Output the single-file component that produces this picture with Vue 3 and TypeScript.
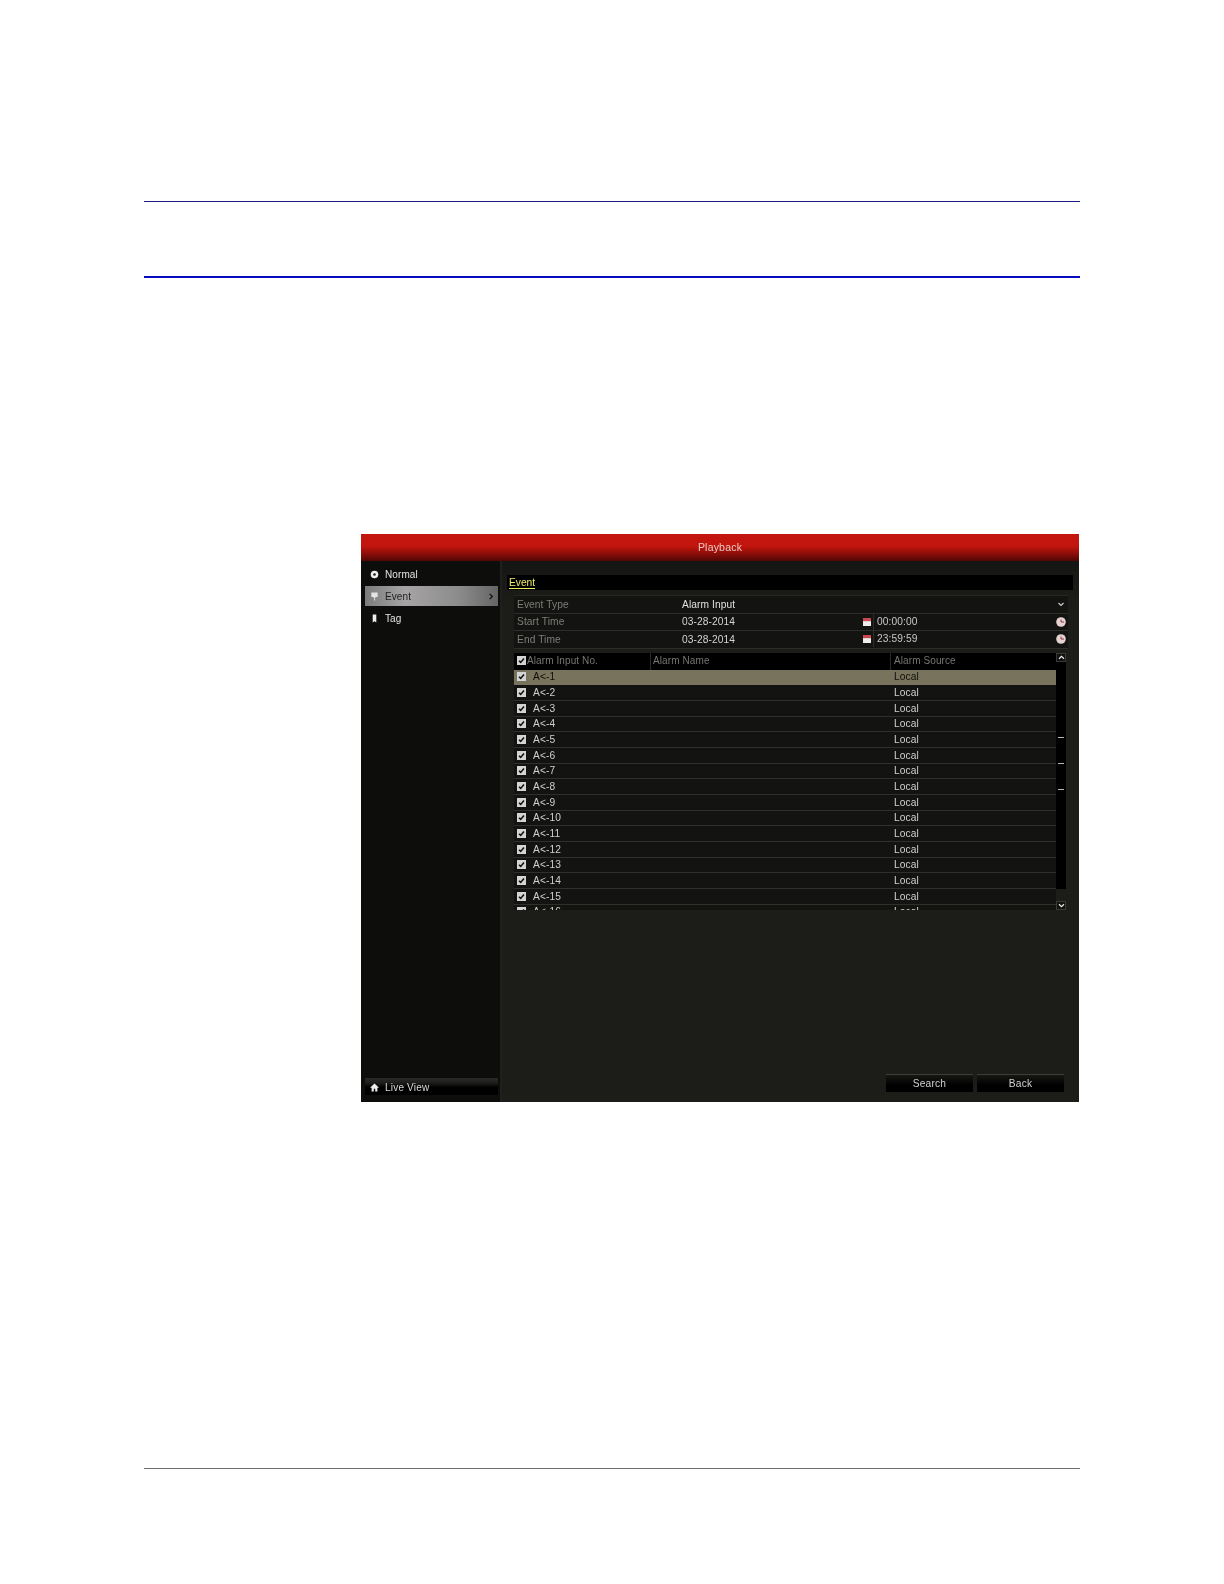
<script setup lang="ts">
const rows: number[] = Array.from({ length: 16 }, (_, i) => i + 1)
</script>

<template>
  <div class="page">
    <div class="rule-top"></div>
    <div class="rule-second"></div>
    <section class="screen">
      <header class="title">Playback</header>
      <div class="body">
        <aside class="side">
          <nav class="menu">
            <div class="item">
              <svg class="ico" viewBox="0 0 10 10"><circle cx="5" cy="5" r="4.200" fill="#eee" /><circle cx="5" cy="5" r="1.500" fill="#222" /></svg>
              <span>Normal</span>
            </div>
            <div class="item active">
              <svg class="ico" viewBox="0 0 10 10"><path d="M1.500 .5h7v5H6v1.500H4V5.500H1.500z" fill="#e4e4e4" /><rect x="4.300" y="7" width="1.400" height="2.500" fill="#cfcfcf" /></svg>
              <span>Event</span>
              <svg class="more" viewBox="0 0 6 8"><path d="M1.500 1l3 3-3 3" fill="none" stroke="#111" stroke-width="1.500" /></svg>
            </div>
            <div class="item">
              <svg class="ico" viewBox="0 0 10 10"><path d="M3 .5h4v9L5 8 3 9.500z" fill="#eee" /></svg>
              <span>Tag</span>
            </div>
          </nav>
          <div class="live">
            <svg class="ico" viewBox="0 0 10 10"><path d="M5 .5L0 5.200h1.800V9.500h2.400V6.500h1.600v3h2.400V5.200H10z" fill="#f0f0f0" /></svg>
            <span>Live View</span>
          </div>
        </aside>
        <main class="main">
          <div class="tabs"><span class="tab">Event</span></div>
          <div class="form">
            <div class="f-row">
              <span class="f-label">Event Type</span>
              <span class="f-value white">Alarm Input</span>
              <svg class="caret" viewBox="0 0 8 5"><path d="M1.500 1l2.500 2.500L6.500 1" fill="none" stroke="#ccc" stroke-width="1.200" /></svg>
            </div>
            <div class="f-row" v-for="r in [{ l: 'Start Time', t: '00:00:00' }, { l: 'End Time', t: '23:59:59' }]" :key="r.l">
              <span class="f-label">{{ r.l }}</span>
              <span class="f-value date">03-28-2014</span>
              <svg class="cal" viewBox="0 0 8 8"><rect width="8" height="8" fill="#eee" /><rect width="8" height="3.200" fill="#c9474e" /></svg>
              <span class="f-time">{{ r.t }}</span>
              <svg class="clock" viewBox="0 0 10 10"><circle cx="5" cy="5" r="4.800" fill="#e6d2d2" /><path d="M5 2.500V5H8" fill="none" stroke="#8d3a3a" stroke-width="1" /></svg>
            </div>
          </div>
          <div class="list">
            <div class="table">
              <div class="t-head">
                <div class="h1"><span class="check head-check"><svg viewBox="0 0 8 8"><path d="M1.800 4.200l1.500 1.500 2.900-3.400" fill="none" stroke="#111" stroke-width="1.400" /></svg></span>Alarm Input No.</div>
                <div class="h2">Alarm Name</div>
                <div class="h3">Alarm Source</div>
              </div>
              <div class="t-body">
                <div class="t-row" :class="{ selected: n === 1 }" v-for="n in rows" :key="n">
                  <span class="check"><svg viewBox="0 0 8 8"><path d="M1.800 4.200l1.500 1.500 2.900-3.400" fill="none" stroke="#111" stroke-width="1.400" /></svg></span>
                  <span class="no">A&lt;-{{ n }}</span>
                  <span class="src">Local</span>
                </div>
              </div>
            </div>
            <div class="scroll">
              <div class="sc-btn"><svg viewBox="0 0 8 6"><path d="M1 4.500l3-3 3 3" fill="none" stroke="#eee" stroke-width="1.400" /></svg></div>
              <div class="track">
                <i class="dash"></i><i class="dash"></i><i class="dash"></i>
              </div>
              <div class="sc-btn down"><svg viewBox="0 0 8 6"><path d="M1 1.500l3 3 3-3" fill="none" stroke="#eee" stroke-width="1.400" /></svg></div>
            </div>
          </div>
          <div class="actions">
            <button class="btn" type="button">Search</button>
            <button class="btn" type="button">Back</button>
          </div>
        </main>
      </div>
    </section>
    <div class="rule-foot"></div>
  </div>
</template>

<style>
html, body { margin: 0; background: #fff; }
</style>

<style scoped>
.page {
  width: 1224px;
  height: 1584px;
  box-sizing: border-box;
  padding: 201px 0 0 144px;
  background: #fff;
  font-family: "Liberation Sans", Arial, sans-serif;
  overflow: hidden;
}
.rule-top { width: 936px; height: 1px; background: #1c1c80; }
.rule-second { width: 936px; height: 2px; margin-top: 74px; background: #0a0ac0; }
.rule-foot { width: 936px; height: 1px; margin-top: 366px; background: #6f6f6f; }

.screen {
  width: 718px;
  height: 568px;
  margin: 256px 0 0 217px;
  background: #0e0f0d;
  display: flex;
  flex-direction: column;
  filter: blur(.35px);
}
.title {
  height: 27px;
  flex: none;
  background: linear-gradient(#c2160e 0%, #c3150d 45%, #7d0c08 80%, #4f0705 100%);
  color: #e8c8c4;
  font-size: 10.500px;
  letter-spacing: .2px;
  text-align: center;
  line-height: 26px;
}
.body { flex: 1; display: flex; min-height: 0; }
.side {
  width: 141px;
  flex: none;
  display: flex;
  flex-direction: column;
  justify-content: space-between;
  background: #0d0e0c;
  border-right: 2px solid #1f201d;
  box-sizing: border-box;
}
.menu { padding: 2px 0 0 4px; }
.item {
  height: 22px;
  display: flex;
  align-items: center;
  color: #e4e4e4;
  font-size: 10px;
  letter-spacing: .1px;
  padding-left: 5px;
  width: 133px;
  box-sizing: border-box;
  position: relative;
}
.item.active {
  background: linear-gradient(90deg, #7c7c7c, #a6a4a4 30%, #8d8c8c 70%, #656565);
  background-size: 100% 20px;
  background-position: 0 1px;
  background-repeat: no-repeat;
  color: #1e1e1e;
}
.ico { width: 9px; height: 9px; margin-right: 6px; flex: none; }
.more { position: absolute; right: 4px; top: 8px; width: 6px; height: 7px; }
.live {
  height: 17px;
  box-sizing: border-box;
  margin: 0 2px 7px 4px;
  padding: 2px 0 0 5px;
  display: flex;
  align-items: center;
  color: #d8d8d8;
  font-size: 10px;
  letter-spacing: .2px;
  background: linear-gradient(#2a2b28 0%, #1c1d1a 30%, #000 55%, #000 100%);
}

.main {
  flex: 1;
  min-width: 0;
  background: linear-gradient(#151613, #1c1d19 8%);
  padding: 14px 6px 0 5px;
  display: flex;
  flex-direction: column;
  position: relative;
}
.tabs {
  height: 15px;
  box-sizing: border-box;
  background: #000;
  flex: none;
  padding: 1px 0 0 2px;
}
.tab {
  display: block;
  width: fit-content;
  height: 12px;
  line-height: 13px;
  font-size: 10.200px;
  color: #eded63;
  border-bottom: 1px solid #eded63;
}
.form {
  margin: 5px 5px 0 7px;
  background: #131411;
  flex: none;
  border-top: 1px solid #262723;
}
.f-row {
  height: 17.500px;
  box-sizing: border-box;
  border-bottom: 1px solid #2c2d29;
  display: flex;
  align-items: center;
  font-size: 10.200px;
  letter-spacing: .1px;
  position: relative;
}
.f-label { width: 168px; flex: none; padding-left: 3px; box-sizing: border-box; color: #7d7d79; }
.f-value { color: #d4d4d2; }
.f-value.white { color: #e0e0e0; }
.f-value.date { width: 181px; flex: none; }
.caret { position: absolute; right: 3px; top: 6px; width: 8px; height: 5px; }
.cal { width: 8px; height: 8px; flex: none; }
.f-time {
  margin-left: 2px;
  padding-left: 3px;
  border-left: 1px solid #2c2d29;
  height: 16px;
  line-height: 16px;
  color: #c8c8c6;
}
.clock { position: absolute; right: 2px; top: 3px; width: 10px; height: 10px; }

.list { display: flex; margin: 4px 5px 0 7px; flex: none; height: 257px; }
.table {
  width: 542px;
  flex: none;
  overflow: hidden;
  display: flex;
  flex-direction: column;
}
.t-head {
  height: 17px;
  flex: none;
  background: #000;
  display: flex;
  font-size: 10px;
  letter-spacing: .1px;
  color: #767672;
  line-height: 15px;
}
.h1 { width: 136px; height: 15px; display: flex; align-items: center; padding-left: 3px; box-sizing: border-box; }
.h2 { width: 240px; border-left: 1px solid #2a2b28; padding-left: 2px; box-sizing: border-box; }
.h3 { flex: 1; border-left: 1px solid #2a2b28; padding-left: 3px; box-sizing: border-box; }
.t-body { flex: 1; overflow: hidden; background: #131411; }
.t-row {
  height: 15.680px;
  box-sizing: border-box;
  display: flex;
  align-items: center;
  border-bottom: 1px solid #2f302c;
  font-size: 10.200px;
  letter-spacing: .1px;
  color: #d0d0ce;
  padding-left: 3px;
}
.t-row.selected { background: #77735c; color: #0f0f08; border-bottom-color: #77735c; }
.check {
  width: 9px;
  height: 9px;
  background: #d4d4d4;
  display: flex;
  flex: none;
}
.check svg { width: 9px; height: 9px; }
.head-check { margin-right: 1px; }
.no { margin-left: 7px; width: 361px; flex: none; }
.selected .src { color: #0f0f08; }

.scroll { width: 10px; display: flex; flex-direction: column; flex: none; }
.sc-btn {
  height: 9px;
  box-sizing: border-box;
  background: #111;
  border: 1px solid #3a3a37;
  flex: none;
  display: flex;
  align-items: center;
  justify-content: center;
}
.sc-btn svg { width: 7px; height: 5px; flex: none; }
.sc-btn.down { margin-top: 12px; }
.track {
  flex: 1;
  background: #000;
  display: flex;
  flex-direction: column;
  align-items: center;
  padding-top: 75px;
  gap: 25px;
  box-sizing: border-box;
}
.dash { width: 6px; height: 1px; background: #b8b8b8; display: block; }

.actions {
  margin-top: auto;
  margin-bottom: 10px;
  display: flex;
  justify-content: flex-end;
  gap: 4px;
  padding-right: 9px;
}
.btn {
  width: 87px;
  height: 18px;
  padding: 0;
  border: 0;
  border-top: 1px solid #3c3c38;
  background: linear-gradient(#171715, #000 60%);
  color: #d0d0d0;
  font: 10.200px "Liberation Sans", Arial, sans-serif;
  letter-spacing: .2px;
}
</style>
